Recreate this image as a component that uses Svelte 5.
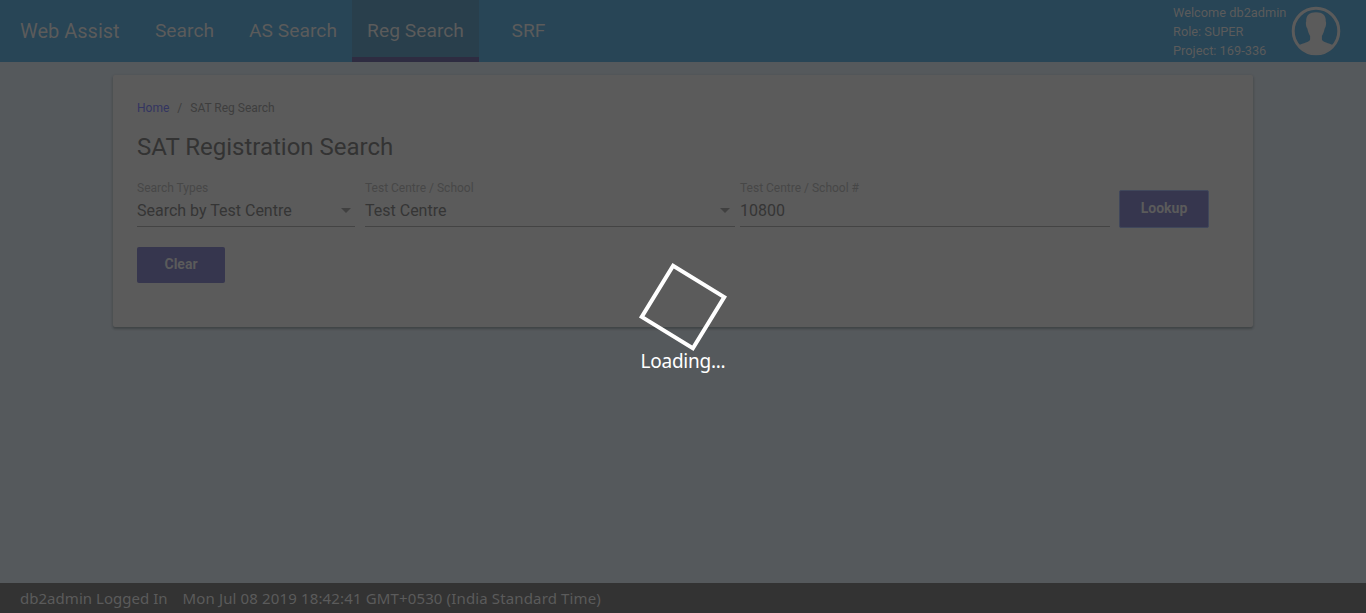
<script>
  const links = [
    { label: 'Search', width: 99 },
    { label: 'AS Search', width: 118 },
    { label: 'Reg Search', width: 127, active: true },
    { label: 'SRF', width: 99 }
  ];
  const fields = [
    { label: 'Search Types', value: 'Search by Test Centre', width: 218, gap: 10, select: true },
    { label: 'Test Centre / School', value: 'Test Centre', width: 370, gap: 5, select: true },
    { label: 'Test Centre / School #', value: '10800', width: 370, gap: 10, select: false }
  ];
</script>

<div class="page">
  <header>
    <div class="brand">Web Assist</div>
    <nav>
      {#each links as link}
        <a class:active={link.active} style="width: {link.width}px">{link.label}</a>
      {/each}
    </nav>
    <div class="user">
      <div>Welcome db2admin</div>
      <div>Role: SUPER</div>
      <div>Project: 169-336</div>
    </div>
    <svg class="avatar" width="50" height="50" viewBox="0 0 50 50">
      <circle cx="25" cy="25" r="22.8" fill="none" stroke="#5b5b5b" stroke-width="3" />
      <path d="M25 6.3C18.5 6.3 14.8 9.3 15.2 15.5C14.4 16.4 15.1 21 16.3 22.6C17 26 17.9 28.2 19.1 30V33.6C18.5 36.2 12 37.2 7.8 39.2C12 44.6 17.8 48 25 48S38 44.6 42.2 39.2C38 37.2 31.5 36.2 30.9 33.6V30C32.1 28.2 33 26 33.7 22.6C34.9 21 35.6 16.4 34.8 15.5C35.2 9.3 31.5 6.3 25 6.3Z" fill="#5b5b5b" />
    </svg>
  </header>

  <main>
    <section class="card">
      <div class="crumbs"><a>Home</a><span class="slash">/</span><span>SAT Reg Search</span></div>
      <h1>SAT Registration Search</h1>
      <div class="form">
        {#each fields as f}
          <div class="field" style="width: {f.width}px; margin-right: {f.gap}px">
            <div class="label">{f.label}</div>
            <div class="value">
              <span>{f.value}</span>
              {#if f.select}<i class="arrow"></i>{/if}
            </div>
          </div>
        {/each}
        <button class="lookup">Lookup</button>
      </div>
      <button class="clear">Clear</button>
    </section>
  </main>

  <footer><span class="who">db2admin Logged In</span><span class="date">Mon Jul 08 2019 18:42:41 GMT+0530 (India Standard Time)</span></footer>

  <div class="overlay">
    <div class="spinner"></div>
    <div class="loading">Loading...</div>
  </div>
</div>

<style>
  .page {
    position: relative;
    height: 613px;
    display: flex;
    flex-direction: column;
    overflow: hidden;
    background: #55595c;
    font-family: Roboto, sans-serif;
    color: #333;
  }
  header {
    height: 62px;
    flex: none;
    display: flex;
    background: #284556;
    color: #5b5b5b;
  }
  .brand {
    width: 115px;
    padding-left: 20px;
    font-size: 20px;
    line-height: 62px;
    white-space: nowrap;
  }
  nav { display: flex; }
  nav a {
    box-sizing: border-box;
    height: 62px;
    text-align: center;
    font-size: 19.2px;
    line-height: 61px;
    letter-spacing: .04px;
    border-bottom: 5px solid transparent;
  }
  nav a.active {
    background: #293f4c;
    border-bottom-color: #2e2c41;
  }
  .user {
    margin-left: auto;
    padding-top: 3px;
    width: 118px;
    font-size: 12.8px;
    line-height: 19px;
    white-space: nowrap;
  }
  .avatar { margin: 6px 25px 0 0; flex: none; }
  main { flex: 1; padding: 13px 113px 0; }
  .card {
    box-sizing: border-box;
    height: 252px;
    padding: 24px;
    border-radius: 2px;
    background: #5b5b5b;
    box-shadow: 0 1px 3px rgba(30, 34, 36, .2), 0 2px 2px rgba(30, 34, 36, .25);
  }
  .crumbs {
    display: flex;
    font-size: 12px;
    line-height: 18px;
    color: #3e3e3e;
  }
  .crumbs a { color: #333561; }
  .slash { margin: 0 8px; }
  h1 {
    margin: 14px 0 0;
    font-size: 24px;
    line-height: 32px;
    font-weight: 400;
  }
  .form { display: flex; height: 64px; margin-top: 16px; }
  .field { height: 49px; }
  .label { font-size: 12px; line-height: 18px; color: #474747; }
  .value {
    display: flex;
    justify-content: space-between;
    align-items: center;
    height: 29px;
    border-bottom: 1px solid #444;
    font-size: 16px;
    line-height: 28px;
    color: #353535;
  }
  .value span { padding-bottom: 1px; }
  .arrow {
    margin: 0 4px 2px 0;
    border: 5px solid transparent;
    border-top-color: #404040;
    border-bottom: 0;
  }
  .field:nth-child(2) .arrow { margin-right: 5px; }
  button {
    display: block;
    padding: 0 0 2px;
    border: 0;
    border-radius: 2px;
    background: #36364e;
    color: #5b5b5b;
    font: 700 14px/34px Roboto, sans-serif;
  }
  .clear { width: 88px; height: 36px; margin-top: 4px; }
  .lookup {
    width: 90px;
    height: 38px;
    margin: 11px 0 0 -1px;
    padding-bottom: 2px;
    border: 1px solid #40475b;
    line-height: 34px;
  }
  footer {
    height: 30px;
    flex: none;
    display: flex;
    padding-left: 20px;
    background: #333;
    color: #5b5b5b;
    font-family: "Noto Sans", sans-serif;
    font-size: 15px;
    line-height: 31px;
    white-space: nowrap;
  }
  .who { width: 162.5px; letter-spacing: .03px; }
  .date { letter-spacing: .14px; }
  .overlay {
    position: absolute;
    inset: 0;
    display: flex;
    flex-direction: column;
    align-items: center;
    padding-top: 275px;
    color: #fff;
  }
  .spinner {
    box-sizing: border-box;
    flex: none;
    width: 64px;
    height: 64px;
    border: 4px solid #fff;
    transform: rotate(31.5deg);
  }
  .loading {
    margin-top: 8px;
    font: 19px/28px "Noto Sans", sans-serif;
    letter-spacing: -.25px;
  }
</style>
